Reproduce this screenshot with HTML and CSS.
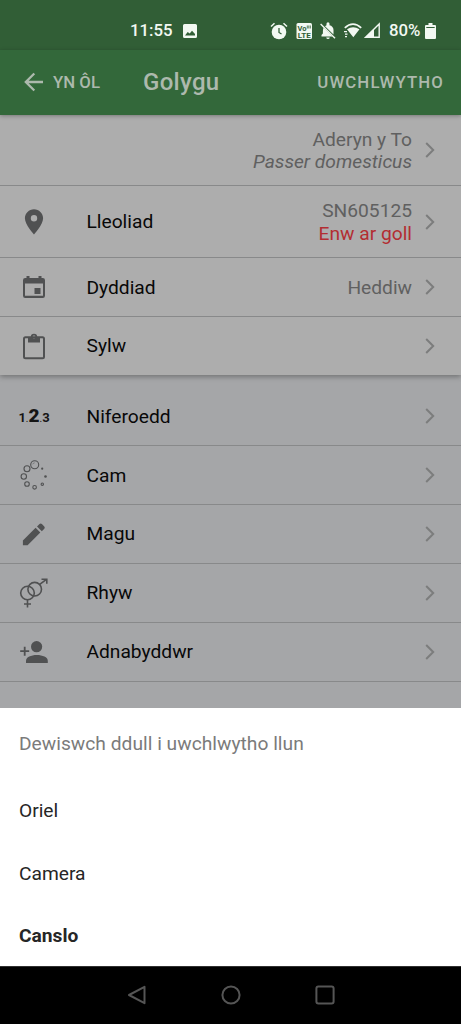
FILE: index.html
```html
<!DOCTYPE html>
<html lang="cy">
<head>
<meta charset="utf-8">
<title>Golygu</title>
<link rel="stylesheet" href="styles.css">
</head>
<body>
<div class="phone">
  <div class="status">
    <span class="time">11:55</span>
    <svg class="s-image" width="14" height="14" viewBox="0 0 14 14"><path fill="currentColor" fill-rule="evenodd" d="M1.5 0h11A1.5 1.5 0 0 1 14 1.5v11a1.5 1.5 0 0 1-1.500 1.500h-11A1.500 1.500 0 0 1 0 12.500v-11A1.500 1.500 0 0 1 1.500 0zM2 11.500h10V10L9 6.700 6.700 9.600 4.700 8z"/></svg>
    <svg class="s-alarm" width="18" height="18" viewBox="0 0 18 18"><circle cx="9" cy="10" r="7.300" fill="currentColor"/><path d="M1 4.500 4.500 1.300M17 4.500l-3.500-3.200" stroke="currentColor" stroke-width="1.500"/><path class="cut" d="M9 6v4.500l2.500 1.500" fill="none" stroke-width="1.300"/></svg>
    <svg class="s-lte" width="16" height="16" viewBox="0 0 16 16"><rect x=".5" width="15.500" height="16" rx="1.500" fill="currentColor"/><text x="1.500" y="7.500" class="lte" textLength="9" lengthAdjust="spacingAndGlyphs">Vo</text><path class="cut" d="M11.300 2.500v3M12.800 2.500v3M14.300 2.500v3" stroke-width=".8"/><text x="1.700" y="14.700" class="lte" textLength="13" lengthAdjust="spacingAndGlyphs">LTE</text></svg>
    <svg class="s-bell" width="16" height="16" viewBox="0 0 16 16"><path fill="currentColor" d="M8 16a1.800 1.800 0 0 0 1.800-1.500H6.200A1.800 1.800 0 0 0 8 16zM1.500 13.500h11L3.700 4.700C2.900 6 2.900 7.500 2.900 10.500L1.500 12zM5 3.200 13.500 11.500V7c0-2.500-1.600-4.300-4-4.800V.8a1.500 1.500 0 0 0-3 0v1.400z"/><path d="M.6 1 15 15.300" stroke="currentColor" stroke-width="1.400"/></svg>
    <svg class="s-wifi" width="18" height="15" viewBox="0 0 18 15"><path d="M.8 4.800Q9-2.600 17.200 4.800" fill="none" stroke="currentColor" stroke-width="1.800"/><path fill="currentColor" d="M3 6.300Q9 2 15.500 6.300L9.300 14.300zM0 8h3v1.300H0zm1 2.500h2.500v1.300H1zM1 13h2v1.300H1z"/></svg>
    <svg class="s-signal" width="16" height="15" viewBox="0 0 16 15"><path d="M1.600 14.300 15.200 1v13.300z" fill="none" stroke="currentColor" stroke-width="1.400"/><path d="M.5 15 10 6v9z" fill="currentColor"/></svg>
    <span class="pct">80%</span>
    <svg class="s-batt" width="11" height="16" viewBox="0 0 11 16"><path fill="currentColor" d="M3.500 0h4v2H10a1 1 0 0 1 1 1v12a1 1 0 0 1-1 1H1a1 1 0 0 1-1-1V3a1 1 0 0 1 1-1h2.500z"/><path class="cut" d="M1.300 4.500h8.400" stroke-width="1"/></svg>
  </div>

  <header class="appbar">
    <svg class="back" width="20" height="20" viewBox="0 0 20 20"><path d="M19 10H2M10.300 1.500 1.800 10l8.500 8.500" fill="none" stroke="currentColor" stroke-width="2.300"/></svg>
    <span class="back-label">YN ÔL</span>
    <h1 class="title">Golygu</h1>
    <span class="upload">UWCHLWYTHO</span>
  </header>

  <main class="content">
    <section class="card">
      <div class="row row-species">
        <span class="icon"></span><span class="label"></span>
        <span class="value">Aderyn y To<br><i>Passer domesticus</i></span>
        <svg class="chev" viewBox="0 0 10 16"><path d="m1.200 1 7 7-7 7"/></svg>
      </div>
      <div class="row row-place">
        <span class="icon"><svg width="28" height="28" viewBox="0 0 28 28"><path fill="currentColor" fill-rule="evenodd" d="M14 1.300c-5 0-9.100 4-9.100 9C4.900 17 14 26.500 14 26.500S23.100 17 23.100 10.300c0-5-4.100-9-9.100-9zm0 5.800a3.200 3.200 0 1 1 0 6.400 3.200 3.200 0 0 1 0-6.400z"/></svg></span>
        <span class="label">Lleoliad</span>
        <span class="value">SN605125<br><span class="error">Enw ar goll</span></span>
        <svg class="chev" viewBox="0 0 10 16"><path d="m1.200 1 7 7-7 7"/></svg>
      </div>
      <div class="row row-date">
        <span class="icon"><svg width="28" height="28" viewBox="0 0 28 28"><path fill="currentColor" fill-rule="evenodd" d="M6.500 3h3v2h9V3h3v2h1.300A2.200 2.200 0 0 1 25 7.200v15.600a2.200 2.200 0 0 1-2.200 2.200H5.200A2.200 2.200 0 0 1 3 22.800V7.200A2.200 2.200 0 0 1 5.200 5h1.300zM5 10.500V22.800h18V10.500zM14.500 15h6v6h-6z"/></svg></span>
        <span class="label">Dyddiad</span>
        <span class="value">Heddiw</span>
        <svg class="chev" viewBox="0 0 10 16"><path d="m1.200 1 7 7-7 7"/></svg>
      </div>
      <div class="row row-note">
        <span class="icon"><svg width="28" height="28" viewBox="0 0 28 28"><rect x="4" y="5.200" width="20" height="21" rx="1.500" fill="none" stroke="currentColor" stroke-width="2"/><path fill="currentColor" fill-rule="evenodd" d="M8 5h2.800a3.200 3.200 0 0 1 6.400 0H20v5.500H8zm6-1.400a1.400 1.400 0 1 0 0 2.800 1.400 1.400 0 0 0 0-2.800z"/></svg></span>
        <span class="label">Sylw</span>
        <svg class="chev" viewBox="0 0 10 16"><path d="m1.200 1 7 7-7 7"/></svg>
      </div>
    </section>

    <section class="list">
      <div class="row">
        <span class="icon number"><span>1</span><small>.</small><b>2</b><small>.</small><span>3</span></span>
        <span class="label">Niferoedd</span>
        <svg class="chev" viewBox="0 0 10 16"><path d="m1.200 1 7 7-7 7"/></svg>
      </div>
      <div class="row">
        <span class="icon"><svg width="28" height="30" viewBox="0 0 28 30"><g fill="none" stroke="currentColor" stroke-width="1.100"><circle cx="14.700" cy="4.800" r="4"/><circle cx="7" cy="8.800" r="3"/><circle cx="3.800" cy="16.500" r="2.700"/><circle cx="7" cy="24" r="2.300"/><circle cx="14.600" cy="27.300" r="1.800"/><circle cx="22.300" cy="24.200" r="1.200"/></g><circle cx="25.500" cy="16.500" r="1.300" fill="currentColor"/><circle cx="22.200" cy="8.700" r="1.100" fill="currentColor"/><path d="M12.700 4.300q.5-1.500 2-1.500" fill="none" stroke="currentColor" stroke-width=".5"/></svg></span>
        <span class="label">Cam</span>
        <svg class="chev" viewBox="0 0 10 16"><path d="m1.200 1 7 7-7 7"/></svg>
      </div>
      <div class="row">
        <span class="icon"><svg width="28" height="28" viewBox="0 0 28 28"><path fill="currentColor" d="M2.900 20.500 15.600 7.800l4.700 4.700L7.600 25.200H2.900zM17 6.400l2.500-2.500q1.200-1 2.400 0l2.400 2.500q1 1.200 0 2.300l-2.500 2.500z"/></svg></span>
        <span class="label">Magu</span>
        <svg class="chev" viewBox="0 0 10 16"><path d="m1.200 1 7 7-7 7"/></svg>
      </div>
      <div class="row">
        <span class="icon"><svg width="28" height="30" viewBox="0 0 28 30"><g fill="none" stroke="currentColor" stroke-width="1.600"><circle cx="7.500" cy="15" r="6.800"/><circle cx="14.700" cy="11.200" r="6.800"/><path d="M7.500 22v7.500M4 26h7M19.700 6.400 26.500 1.300M21.500 1.300h5.300v4.500"/></g></svg></span>
        <span class="label">Rhyw</span>
        <svg class="chev" viewBox="0 0 10 16"><path d="m1.200 1 7 7-7 7"/></svg>
      </div>
      <div class="row">
        <span class="icon"><svg width="28" height="28" viewBox="0 0 28 28"><circle cx="16.600" cy="8.700" r="5.600" fill="currentColor"/><path fill="currentColor" d="M6 25v-2.300c0-3.500 5-5.700 10.800-5.700s11 2.200 11 5.700V25z"/><path d="M.2 13.200h9M4.700 8.700v9" stroke="currentColor" stroke-width="1.800"/></svg></span>
        <span class="label">Adnabyddwr</span>
        <svg class="chev" viewBox="0 0 10 16"><path d="m1.200 1 7 7-7 7"/></svg>
      </div>
    </section>
  </main>

  <section class="sheet">
    <div class="sheet-title">Dewiswch ddull i uwchlwytho llun</div>
    <div class="option">Oriel</div>
    <div class="option">Camera</div>
    <div class="option cancel">Canslo</div>
  </section>

  <nav class="nav">
    <svg width="20" height="20" viewBox="0 0 20 20"><path d="M17.500 1.800v16.400L2 10z"/></svg>
    <svg width="20" height="20" viewBox="0 0 20 20"><circle cx="10" cy="10" r="8.600"/></svg>
    <svg width="20" height="20" viewBox="0 0 20 20"><rect x="1.400" y="1.400" width="17.200" height="17.200" rx="2"/></svg>
  </nav>
</div>
</body>
</html>
```
FILE: styles.css
```css
* { box-sizing: border-box; }
body { margin: 0; }
svg { display: block; flex: none; overflow: visible; }

.phone {
  width: 461px;
  height: 1024px;
  display: flex;
  flex-direction: column;
  overflow: hidden;
  background: #a5a6a8;
  font: 19.2px/22.4px Roboto, sans-serif;
}

.status {
  height: 50px;
  flex: none;
  display: flex;
  align-items: center;
  padding: 11px 0 0 130px;
  background: #315e36;
  color: #f2f8f2;
  font-size: 16.800px;
  font-weight: 500;
}
.time { width: 53px; }
.s-alarm { margin-left: 73px; }
.s-lte { margin-left: 8px; }
.s-bell { margin-left: 8px; }
.s-wifi { margin-left: 8px; }
.s-signal { margin-left: 2px; }
.pct { margin-left: 9px; width: 36px; }
.cut { stroke: #315e36; }
.lte { font: bold 8px Roboto, sans-serif; fill: #315e36; }

.appbar {
  height: 65px;
  flex: none;
  display: flex;
  align-items: center;
  padding: 0 18px 1px 24px;
  background: #33683a;
  color: #adb9ad;
  position: relative;
  z-index: 1;
  box-shadow: 0 1px 4px rgba(0, 0, 0, .3);
}
.back-label { margin-left: 9px; width: 90px; padding-top: 1px; font-size: 16.800px; font-weight: 500; white-space: nowrap; }
.title { margin: 0; padding-top: 1px; font-size: 24px; font-weight: 500; letter-spacing: .3px; }
.upload { margin-left: auto; padding-top: 1px; font-size: 16.800px; font-weight: 500; letter-spacing: 1.120px; margin-right: -1px; }

.content { height: 593px; flex: none; color: #080808; }
.card { background: #adadad; box-shadow: 0 2px 5px rgba(0, 0, 0, .3); }
.row {
  height: 58.8px;
  display: flex;
  align-items: center;
  padding: 0 26px 0 20px;
  border-bottom: 1px solid #88898a;
}
.row-species { height: 71px; }
.row-place { height: 72px; }
.row-date { height: 59px; }
.row-note { height: 58px; border-bottom: 0; }
.icon { width: 28px; color: #505152; flex: none; }
.label { margin-left: 38.500px; padding-top: 1px; }
.value { margin-left: auto; padding-top: 2px; text-align: right; color: #606060; }
.error { color: #b32d32; }
.chev {
  width: 10px;
  height: 16px;
  margin-left: 13px;
  fill: none;
  stroke: #7c7d7d;
  stroke-width: 2;
}
.label + .chev { margin-left: auto; }
.row-place .label, .row-date .label { padding-top: 2px; }
.row-note .label { padding-top: 0; }
.list { padding-top: 12.600px; }
.number {
  display: flex;
  align-items: baseline;
  justify-content: center;
  padding-top: 3px;
  color: #151515;
  font-size: 13px;
  font-weight: 700;
}
.number b { font-size: 19px; }
.number small { font-size: 10px; font-weight: 400; }

.sheet {
  height: 258px;
  flex: none;
  padding: 4px 19px 0;
  background: #fff;
  color: #262626;
}
.sheet-title { height: 67px; line-height: 63px; color: #7b7b7b; letter-spacing: .02px; }
.option { height: 62.500px; line-height: 63.500px; }
.cancel { font-weight: 700; }

.nav {
  flex: 1;
  display: flex;
  align-items: center;
  justify-content: center;
  gap: 74px;
  padding-bottom: 1px;
  background: #000;
  border-top: 1px solid #303030;
}
.nav svg { fill: none; stroke: #555; stroke-width: 2; stroke-linejoin: round; }
```
